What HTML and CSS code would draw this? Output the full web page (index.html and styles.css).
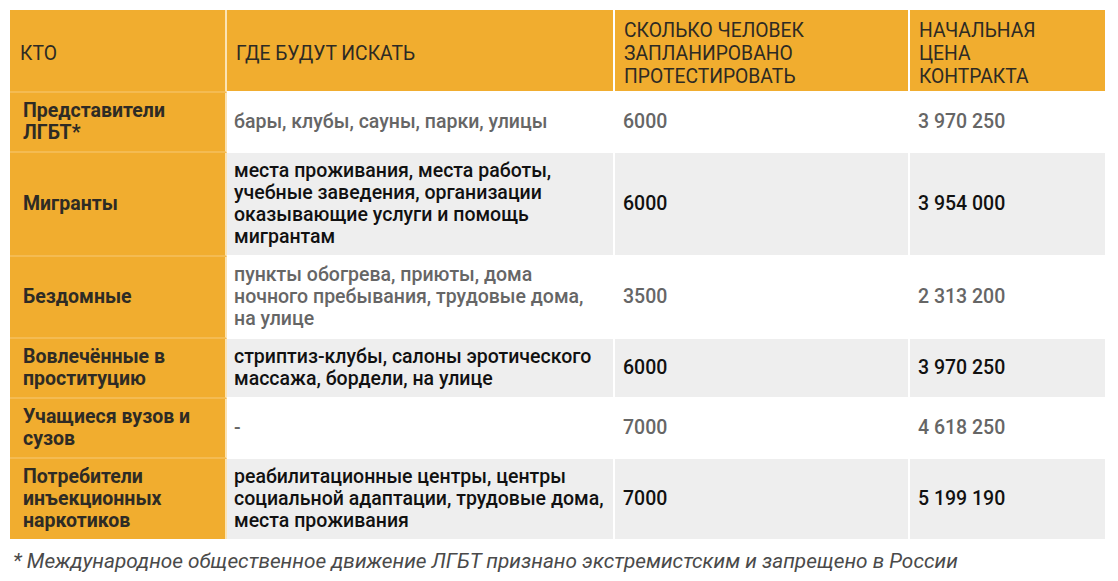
FILE: index.html
```html
<!DOCTYPE html>
<html lang="ru">
<head>
<meta charset="utf-8">
<link rel="stylesheet" href="styles.css">
</head>
<body>
<div class="wrap">
<table class="tbl">
  <colgroup>
    <col class="c1"><col class="c2"><col class="c3"><col class="c4">
  </colgroup>
  <thead>
    <tr>
      <th>КТО</th>
      <th>ГДЕ БУДУТ ИСКАТЬ</th>
      <th>СКОЛЬКО ЧЕЛОВЕК ЗАПЛАНИРОВАНО ПРОТЕСТИРОВАТЬ</th>
      <th>НАЧАЛЬНАЯ<br>ЦЕНА<br>КОНТРАКТА</th>
    </tr>
  </thead>
  <tbody>
    <tr class="odd">
      <td>Представители ЛГБТ*</td>
      <td>бары, клубы, сауны, парки, улицы</td>
      <td>6000</td>
      <td>3 970 250</td>
    </tr>
    <tr class="even">
      <td>Мигранты</td>
      <td>места проживания, места работы, учебные заведения, организации оказывающие услуги и помощь мигрантам</td>
      <td>6000</td>
      <td>3 954 000</td>
    </tr>
    <tr class="odd">
      <td>Бездомные</td>
      <td>пункты обогрева, приюты, дома ночного пребывания, трудовые дома, на улице</td>
      <td>3500</td>
      <td>2 313 200</td>
    </tr>
    <tr class="even">
      <td>Вовлечённые в проституцию</td>
      <td>стриптиз-клубы, салоны эротического массажа, бордели, на улице</td>
      <td>6000</td>
      <td>3 970 250</td>
    </tr>
    <tr class="odd">
      <td>Учащиеся вузов и сузов</td>
      <td>-</td>
      <td>7000</td>
      <td>4 618 250</td>
    </tr>
    <tr class="even last">
      <td>Потребители инъекционных наркотиков</td>
      <td>реабилитационные центры, центры социальной адаптации, трудовые дома, места проживания</td>
      <td>7000</td>
      <td>5 199 190</td>
    </tr>
  </tbody>
</table>
<p class="note">* Международное общественное движение ЛГБТ признано экстремистским и запрещено в России</p>
</div>
</body>
</html>
```

FILE: styles.css
```css
html, body {
  margin: 0;
  padding: 0;
  background: #fff;
}
body {
  font-family: Roboto, "Liberation Sans", sans-serif;
}
.wrap {
  padding: 10px 13px 0 10px;
}
.tbl {
  width: 1095px;
  border-collapse: separate;
  border-spacing: 0;
  table-layout: fixed;
  font-size: 19.5px;
  line-height: 22px;
}
.c1 { width: 217px; }
.c2 { width: 388px; }
.c3 { width: 295px; }
.c4 { width: 195px; }

.tbl th {
  background: #f1ad2f;
  color: #2d2a24;
  font-weight: 400;
  font-size: 19.3px;
  line-height: 23px;
  text-align: left;
  vertical-align: middle;
  padding: 9px 8px 3px 9px;
  border-right: 2px solid #fff;
  border-bottom: 2px solid #fff;
}
.tbl th:first-child {
  padding-left: 10px;
  border-right-color: #fbe3b4;
  border-bottom: 2px solid #f4bb52;
}
.tbl th:last-child { border-right: none; }

.tbl td {
  padding: 7px 8px 7px 7px;
  vertical-align: middle;
  font-weight: 500;
  border-right: 2px solid #fff;
  border-bottom: 2px solid #fff;
}
.tbl td:last-child { border-right: none; }
.tbl td:nth-child(3), .tbl td:nth-child(4) { padding-left: 8px; }

.tbl td:first-child {
  background: #f1ad2f;
  color: #2e2b25;
  font-weight: 700;
  padding-left: 13px;
  border-bottom: 2px solid #f4bb52;
  border-right-color: #fbe3b4;
}
.tbl tr.last td { border-bottom: none; }

.odd td { background: #fff; color: #666; }
.even td { background: #eeeeee; color: #111; }

.note {
  margin: 10px 0 0 3px;
  font-style: italic;
  font-size: 20.8px;
  line-height: 24px;
  color: #4a4a4a;
}
```
